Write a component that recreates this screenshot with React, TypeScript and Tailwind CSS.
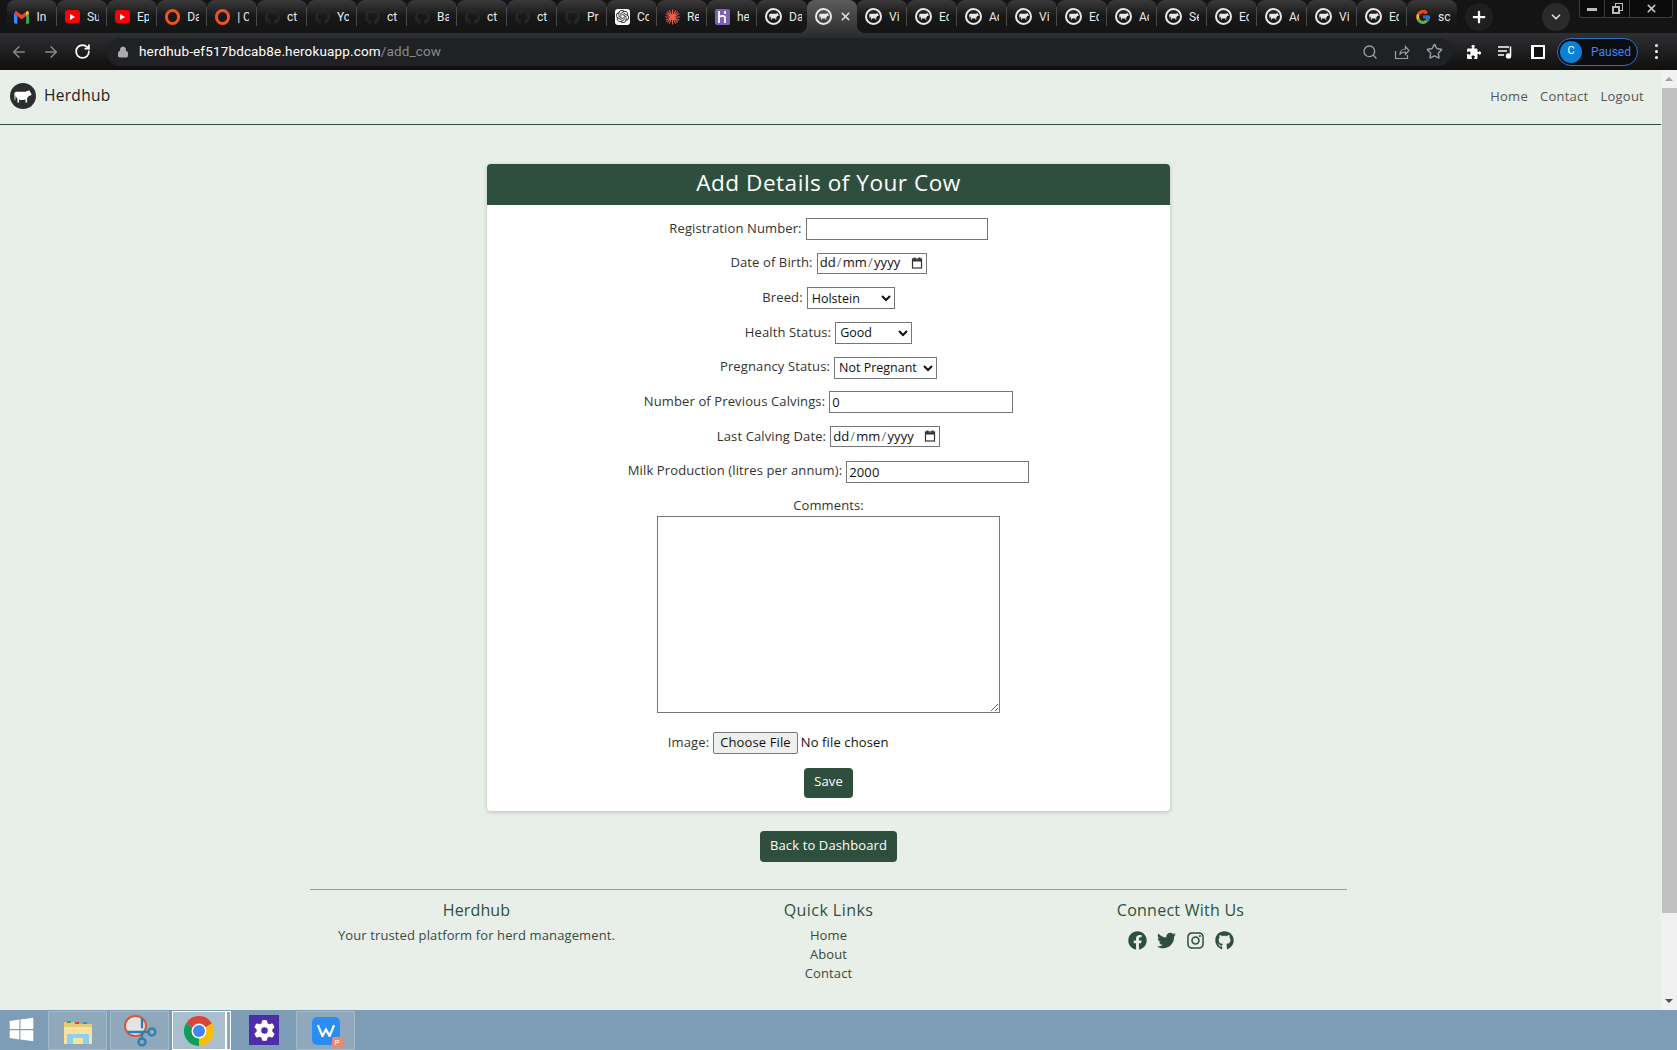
import React from 'react';
import { ArrowLeft, ArrowRight, RotateCw, Lock, Search, Star, Plus, ChevronDown, X, Scissors } from 'lucide-react';
import { FaWindows, FaGear, FaPuzzlePiece } from 'react-icons/fa6';
import { FaFacebook, FaTwitter, FaInstagram, FaGithub } from 'react-icons/fa';
import { FcGoogle } from 'react-icons/fc';
import { SiOpenai } from 'react-icons/si';

type TabIcon = 'gmail' | 'yt' | 'ring' | 'gh' | 'openai' | 'star' | 'heroku' | 'cow' | 'google';

const tabs: { icon: TabIcon; label: string; active?: boolean }[] = [
    { icon: 'gmail', label: 'In' },
    { icon: 'yt', label: 'Su' },
    { icon: 'yt', label: 'Ep' },
    { icon: 'ring', label: 'Da' },
    { icon: 'ring', label: '| C' },
    { icon: 'gh', label: 'ct' },
    { icon: 'gh', label: 'Yc' },
    { icon: 'gh', label: 'ct' },
    { icon: 'gh', label: 'Ba' },
    { icon: 'gh', label: 'ct' },
    { icon: 'gh', label: 'ct' },
    { icon: 'gh', label: 'Pr' },
    { icon: 'openai', label: 'Cc' },
    { icon: 'star', label: 'Re' },
    { icon: 'heroku', label: 'he' },
    { icon: 'cow', label: 'Da' },
    { icon: 'cow', label: '', active: true },
    { icon: 'cow', label: 'Vi' },
    { icon: 'cow', label: 'Ec' },
    { icon: 'cow', label: 'Ac' },
    { icon: 'cow', label: 'Vi' },
    { icon: 'cow', label: 'Ec' },
    { icon: 'cow', label: 'Ac' },
    { icon: 'cow', label: 'Se' },
    { icon: 'cow', label: 'Ec' },
    { icon: 'cow', label: 'Ac' },
    { icon: 'cow', label: 'Vi' },
    { icon: 'cow', label: 'Ec' },
    { icon: 'google', label: 'sc' },
];

const CowShape = ({ className }: { className: string }) => (
    <svg viewBox="0 0 24 20" className={className} fill="currentColor">
        <path d="M0.500 5L3 3.500H14.500C16 3.500 16.500 2.500 18 2.500L20.500 1.500L21 3L23.500 7L22.500 8.800L20 9L18.500 11L17.500 12V18H15.300V13.500L13 14.500H8L6.800 13.500V18H4.600V13L3 11L2.500 8L1.500 15H0.800z" />
    </svg>
);

const Favicon = ({ icon }: { icon: TabIcon }) => {
    if (icon === 'gmail') {
        return (
            <svg viewBox="0 0 16 14" className="w-4 h-[14px] -ml-px">
                <path d="M0 3v9.500A1.500 1.500 0 0 0 1.500 14H3.500V6z" fill="#4285f4" />
                <path d="M16 3v9.500a1.500 1.500 0 0 1-1.500 1.500H12.500V6z" fill="#34a853" />
                <path d="M0 3l3.500 3L8 9.500 12.500 6 16 3 14 0.500 8 5 2 0.500z" fill="#ea4335" />
                <path d="M12.500 6L16 3 14 0.500 12.500 1.700z" fill="#fbbc04" />
            </svg>
        );
    }
    if (icon === 'yt') {
        return (
            <div className="w-4 h-[13px] rounded-[3px] bg-[#f00] flex items-center justify-center">
                <div className="w-0 h-0 border-y-[3px] border-y-transparent border-l-[5px] border-l-white" />
            </div>
        );
    }
    if (icon === 'ring') return <div className="w-4 h-4 rounded-full border-[3px] border-[#f4511e]" />;
    if (icon === 'gh') return <FaGithub className="text-[#24272b]" size={16} />;
    if (icon === 'openai') {
        return (
            <div className="w-4 h-4 rounded-[3px] bg-white flex items-center justify-center">
                <SiOpenai className="text-[#222]" size={13} />
            </div>
        );
    }
    if (icon === 'star') {
        return (
            <svg viewBox="0 0 16 16" className="w-4 h-4" stroke="#e8604c" strokeWidth="1.100">
                <path d="M8 0v16M0 8h16M2.300 2.300l11.400 11.400M13.700 2.300L2.300 13.700M4.500 0.800l7 14.400M11.500 0.800l-7 14.400M0.800 4.500l14.400 7M15.200 4.500l-14.400 7" />
            </svg>
        );
    }
    if (icon === 'heroku') {
        return (
            <div className="w-4 h-4 rounded-[2px] bg-[#7b62b4] flex items-center justify-center">
                <svg viewBox="0 0 10 12" className="w-[10px] h-3" fill="none" stroke="#fff" strokeWidth="1.800">
                    <path d="M2 0v12M2 6c2-1.500 6-2 6 1v5M8 0v3" />
                </svg>
            </div>
        );
    }
    if (icon === 'google') return <FcGoogle size={16} />;
    return (
        <div className="w-[17px] h-[17px] shrink-0 rounded-full border-2 border-[#e8e8e8] flex items-center justify-center">
            <CowShape className="w-[10px] h-[9px] text-[#e8e8e8]" />
        </div>
    );
};

const ChromeBar = () => (
    <div className="h-[70px] shrink-0 bg-[#111] text-white font-['Roboto',sans-serif]">
        <div className="h-[33px] flex pl-[7px] bg-[#141414]">
            {tabs.map((tab, i) => (
                <div key={i} className={i === 15 || i === 17 ? 'bg-[#333] rounded-t-lg' : ''}>
                    <div
                        className={
                            tab.active
                                ? 'w-[50px] h-[36px] shrink-0 rounded-t-lg bg-linear-to-b from-[#5c5c5c] to-[#2c2d2f] flex items-center pl-[8px] gap-[7px] pb-[3px] relative'
                                : `w-[50px] h-[33px] shrink-0 rounded-t-lg bg-linear-to-b from-[#3a3a3a] via-[#181818] to-[#141414] flex items-center pl-[8px] gap-[7px] ${i === 15 ? 'rounded-br-lg' : ''} ${i === 17 ? 'rounded-bl-lg' : ''}`
                        }
                    >
                        <Favicon icon={tab.icon} />
                        {tab.active ? (
                            <X size={13} strokeWidth={3} className="text-[#ddd]" />
                        ) : (
                            <span className="w-[13px] overflow-hidden whitespace-nowrap text-[12px] leading-none text-[#e8eaed]">{tab.label}</span>
                        )}
                        {!tab.active && i !== 15 && i !== 28 && <div className="ml-auto w-px h-[19px] bg-[#4a4a4a]" />}
                    </div>
                </div>
            ))}
            <div className="w-[28px] h-[28px] ml-[8px] mt-[3px] rounded-full bg-[#1f1f1f] flex items-center justify-center">
                <Plus size={18} strokeWidth={3} />
            </div>
            <div className="w-[28px] h-[28px] ml-[49px] mt-[3px] rounded-full bg-[#2a2a2a] flex items-center justify-center">
                <ChevronDown size={14} strokeWidth={3} className="text-[#ddd]" />
            </div>
            <div className="w-[94px] h-[18px] ml-[9px] flex border-x border-b border-[#3c3c3c] rounded-b-[3px] bg-[#0b0b0b] text-[#ccc]">
                <div className="w-[25px] flex items-center justify-center border-r border-[#3c3c3c]">
                    <div className="w-[10px] h-[3px] bg-[#bbb] mt-[2px]" />
                </div>
                <div className="w-[25px] flex items-center justify-center border-r border-[#3c3c3c]">
                    <div className="relative w-[11px] h-[11px]">
                        <div className="absolute top-0 right-0 w-2 h-2 border border-[#bbb]" />
                        <div className="absolute bottom-0 left-0 w-2 h-2 border-2 border-[#bbb] bg-[#0b0b0b]" />
                    </div>
                </div>
                <div className="flex-1 flex items-center justify-center">
                    <X size={13} strokeWidth={3} />
                </div>
            </div>
        </div>
        <div className="h-[37px] flex items-center bg-linear-to-b from-[#2f3032] to-[#0f0f0f]">
            <ArrowLeft size={18} className="ml-[10px] text-[#8a8b8d]" />
            <ArrowRight size={18} className="ml-[14px] text-[#8a8b8d]" />
            <RotateCw size={17} strokeWidth={2.500} className="ml-[14px] text-white" />
            <div className="ml-[15px] w-[1346px] h-[28px] rounded-full bg-[#202124] flex items-center pl-[11px]">
                <Lock size={12} className="text-[#aaa] fill-[#aaa]" />
                <span className="ml-[10px] text-[13.500px] tracking-[0.15px] text-white">herdhub-ef517bdcab8e.herokuapp.com<span className="text-[#8a8b8d]">/add_cow</span></span>
                <div className="ml-auto flex items-center mr-[9px] gap-[16px] text-[#9aa0a6]">
                    <Search size={16} />
                    <svg viewBox="0 0 16 16" className="w-4 h-4" fill="none" stroke="currentColor" strokeWidth="1.200">
                        <path d="M1.500 7v7.500h12V11M6 10c0-3 2.500-5 5.500-5V2.500l3.500 4-3.500 4V8C9 8 7.500 8.500 6 10z" />
                    </svg>
                    <Star size={17} strokeWidth={2} />
                </div>
            </div>
            <FaPuzzlePiece size={14} className="ml-[15px] text-white" />
            <svg viewBox="0 0 16 14" className="w-4 h-[14px] ml-[17px]" fill="none" stroke="#fff" strokeWidth="1.500">
                <path d="M0 2h11M0 6h9M0 10h6M12.500 1.500v9" />
                <circle cx="10.500" cy="11" r="2" fill="#fff" />
            </svg>
            <div className="w-[14px] h-[14px] ml-[17px] bg-white flex justify-end">
                <div className="w-[9px] h-[10px] mt-[2px] mr-[2px] bg-[#111]" />
            </div>
            <div className="ml-[12px] w-[81px] h-[28px] rounded-full border border-[#2f6fd0] bg-[#0c0d10] flex items-center pl-[2px]">
                <div className="w-[22px] h-[22px] rounded-full bg-[#0b80d6] text-white text-[11px] flex items-center justify-center">C</div>
                <span className="ml-[9px] text-[12px] text-[#3f86ee]">Paused</span>
            </div>
            <div className="ml-[17px] flex flex-col gap-[3px]">
                <div className="w-[3px] h-[3px] rounded-full bg-white" />
                <div className="w-[3px] h-[3px] rounded-full bg-white" />
                <div className="w-[3px] h-[3px] rounded-full bg-white" />
            </div>
        </div>
    </div>
);

const fieldClass = 'h-[22px] mt-px border border-[#767676] bg-white px-[2px] text-[#111] outline-none';

const FormRow = ({ label, children }: { label: string; children: React.ReactNode }) => (
    <div className="h-[34.700px] flex items-center justify-center">
        <label className="mr-[4px]">{label}:</label>
        {children}
    </div>
);

const DateField = () => (
    <div className="h-[21px] w-[110px] border border-[#767676] flex items-center pl-[2px] pr-[3px] text-[#111]">
        <span>dd</span>
        <span className="px-[1px] text-[#777]">/</span>
        <span>mm</span>
        <span className="px-[1px] text-[#777]">/</span>
        <span>yyyy</span>
        <svg viewBox="0 0 12 12" className="w-3 h-3 ml-auto" fill="none" stroke="#333">
            <rect x="1.500" y="2" width="9" height="9" strokeWidth="1.200" />
            <path d="M1 3.500h10M3.500 0.500v2M8.500 0.500v2" strokeWidth="2" />
        </svg>
    </div>
);

const Select = ({ width, value }: { width: string; value: string }) => (
    <select defaultValue={value} className={`${width} h-[22px] mt-px border border-[#767676] bg-white text-[12.500px] tracking-normal text-[#111] outline-none`}>
        <option>{value}</option>
    </select>
);

const CowForm = () => (
    <div className="w-[683px] h-[647px] mt-[39px] bg-white rounded-[4px] shadow-[0_1px_4px_rgba(0,0,0,0.2)] overflow-hidden">
        <h2 className="h-[41px] bg-[#2f4f3e] text-white text-center text-[22.600px] leading-[38px] tracking-[0.5px]">Add Details of Your Cow</h2>
        <form className="pt-[6px] text-[#333]">
            <FormRow label="Registration Number">
                <input type="text" className={`${fieldClass} w-[182px]`} />
            </FormRow>
            <FormRow label="Date of Birth">
                <DateField />
            </FormRow>
            <FormRow label="Breed">
                <Select width="w-[88px]" value="Holstein" />
            </FormRow>
            <FormRow label="Health Status">
                <Select width="w-[77px]" value="Good" />
            </FormRow>
            <FormRow label="Pregnancy Status">
                <Select width="w-[103px]" value="Not Pregnant" />
            </FormRow>
            <FormRow label="Number of Previous Calvings">
                <input type="number" defaultValue="0" className={`${fieldClass} w-[184px]`} />
            </FormRow>
            <FormRow label="Last Calving Date">
                <DateField />
            </FormRow>
            <FormRow label="Milk Production (litres per annum)">
                <input type="number" defaultValue="2000" className={`${fieldClass} w-[183px]`} />
            </FormRow>
            <div className="mt-[7px] flex flex-col items-center">
                <label className="leading-[20px] -mt-px pb-px">Comments:</label>
                <textarea className="w-[343px] h-[197px] border border-[#767676] bg-white outline-none block" />
            </div>
            <div className="mt-[19px] h-[22px] flex items-center justify-center">
                <label className="mr-[4px]">Image:</label>
                <input type="file" className="w-[276px] text-[#111] file:h-[22px] file:mr-[3px] file:px-[6px] file:border file:border-[#767676] file:rounded-[2px] file:bg-[#efefef] file:text-[#111]" />
            </div>
            <div className="mt-[14px] flex justify-center">
                <button type="button" className="w-[49px] h-[30px] pb-[2px] rounded-[4px] bg-[#2f4f3e] text-white">Save</button>
            </div>
        </form>
    </div>
);

const Footer = () => (
    <footer className="w-[1037px] mt-[27px] border-t border-[#8ba294] flex justify-center text-center text-[#3a4a42]">
        <div className="w-[352px] shrink-0 -ml-[14px]">
            <h3 className="mt-[9px] text-[16px] leading-[22px] tracking-[0.12px] text-[#2f4f3e]">Herdhub</h3>
            <p className="mt-[5px] leading-[19px]">Your trusted platform for herd management.</p>
        </div>
        <div className="w-[352px] shrink-0">
            <h3 className="mt-[9px] text-[16px] leading-[22px] tracking-[0.45px] text-[#2f4f3e]">Quick Links</h3>
            <ul className="mt-[5px] leading-[19px]">
                <li>Home</li>
                <li>About</li>
                <li>Contact</li>
            </ul>
        </div>
        <div className="w-[352px] shrink-0 -mr-[14px]">
            <h3 className="mt-[9px] text-[16px] leading-[22px] tracking-[0.25px] text-[#2f4f3e]">Connect With Us</h3>
            <div className="mt-[10px] flex justify-center gap-[10px] text-[#2f4f3e]">
                <FaFacebook size={19} />
                <FaTwitter size={19} />
                <FaInstagram size={19} />
                <FaGithub size={19} />
            </div>
        </div>
    </footer>
);

const Scrollbar = () => (
    <div className="w-4 shrink-0 bg-[#f1f1f1] flex flex-col items-center">
        <div className="h-[18px] flex items-center">
            <div className="w-0 h-0 border-x-[4px] border-x-transparent border-b-[4px] border-b-[#a3a3a3]" />
        </div>
        <div className="w-[15px] h-[825px] bg-[#c1c1c1]" />
        <div className="mt-auto h-[18px] flex items-center">
            <div className="w-0 h-0 border-x-[4px] border-x-transparent border-t-[4px] border-t-[#505050]" />
        </div>
    </div>
);

const TaskButton = ({ width, active, children }: { width: string; active?: boolean; children: React.ReactNode }) => (
    <div className={`${width} h-[39px] mt-px border flex items-center justify-center ${active ? 'border-white bg-[#a9bfcd]' : 'border-[#a5bac9] bg-[#8fa8bc]'}`}>
        {children}
    </div>
);

const Taskbar = () => (
    <div className="h-10 shrink-0 bg-[#7d9cb5] flex">
        <FaWindows size={27} className="ml-[8px] mt-[6px] text-white" />
        <div className="ml-[13px]">
            <TaskButton width="w-[59px]">
                <svg viewBox="0 0 32 28" className="w-8 h-7">
                    <path d="M2 5h10l2 2h16v20H2z" fill="#e8c978" />
                    <path d="M2 10h28v17H2z" fill="#f6e2a2" />
                    <path d="M5 4h4v2H5z" fill="#3aa655" />
                    <path d="M13 5h4v2h-4z" fill="#d9453a" />
                    <path d="M21 5h4v2h-4z" fill="#3a8fd9" />
                    <path d="M5 17h22v10h-6v-6H11v6H5z" fill="#8fd0ec" />
                </svg>
            </TaskButton>
        </div>
        <div className="ml-[3px]">
            <TaskButton width="w-[59px]">
                <div className="relative w-[32px] h-[32px]">
                    <div className="absolute left-0 top-0 w-[23px] h-[22px] rounded-full border-2 border-[#d9553f] bg-[#e4e4e4]" />
                    <Scissors size={28} className="absolute left-[4px] top-[3px] text-[#2f7fb0] rotate-[225deg]" />
                </div>
            </TaskButton>
        </div>
        <div className="ml-[3px] flex">
            <TaskButton width="w-[54px]" active>
                <svg viewBox="0 0 32 32" className="w-8 h-8">
                    <path d="M16 16L3 8.500A15 15 0 0 1 29 8.500z" fill="#db4437" />
                    <path d="M16 16L29 8.500A15 15 0 0 1 16 31z" fill="#fbbc04" />
                    <path d="M16 16L16 31A15 15 0 0 1 3 8.500z" fill="#0f9d58" />
                    <circle cx="16" cy="16" r="7.500" fill="#fff" />
                    <circle cx="16" cy="16" r="6" fill="#4285f4" />
                </svg>
            </TaskButton>
            <div className="w-[5px] h-[39px] mt-px border border-white bg-[#8fa8bc]" />
        </div>
        <div className="ml-[18px] mt-[5px] w-[30px] h-[30px] bg-[#4f2da8] flex items-center justify-center">
            <FaGear size={21} className="text-white" />
        </div>
        <div className="ml-[17px]">
            <TaskButton width="w-[59px]">
                <div className="relative w-7 h-7 rounded-[5px] bg-[#2b8cf2] flex items-center justify-center">
                    <svg viewBox="0 0 20 14" className="w-[18px] h-[13px]" fill="none" stroke="#fff" strokeWidth="2.500">
                        <path d="M1 1l5 12 4-7 4 7 5-12" />
                    </svg>
                    <div className="absolute -right-[3px] -bottom-[3px] w-[11px] h-[11px] rounded-[2px] bg-[#f0866a] text-white text-[8px] leading-[11px] text-center font-['Roboto',sans-serif]">P</div>
                </div>
            </TaskButton>
        </div>
    </div>
);

export default function App() {
    return (
        <div className="w-[1677px] h-[1050px] overflow-hidden flex flex-col bg-[#e8efe8]">
            <ChromeBar />
            <div className="flex-1 flex min-h-0">
                <div className="flex-1 min-w-0 font-['Open_Sans',sans-serif] text-[13px] tracking-[0.12px] text-[#333]">
                    <nav className="h-[55px] border-b border-[#2f4f3e] flex items-center justify-between pl-[10px] pr-[17px]">
                        <div className="flex items-center gap-[8px] -mt-[2px]">
                            <div className="w-[26px] h-[26px] rounded-full bg-[#2b2d2f] flex items-center justify-center">
                                <CowShape className="w-[18px] h-[15px] text-white" />
                            </div>
                            <span className="text-[15.500px] tracking-[0.3px] text-[#222] -mt-px">Herdhub</span>
                        </div>
                        <div className="flex gap-[12px] tracking-[0.25px] text-[#555]">
                            <span>Home</span>
                            <span>Contact</span>
                            <span>Logout</span>
                        </div>
                    </nav>
                    <main className="pr-[4px] flex flex-col items-center">
                        <CowForm />
                        <button type="button" className="mt-[20px] w-[137px] h-[31px] pb-px rounded-[4px] bg-[#2f4f3e] text-white">Back to Dashboard</button>
                        <Footer />
                    </main>
                </div>
                <Scrollbar />
            </div>
            <Taskbar />
        </div>
    );
}
